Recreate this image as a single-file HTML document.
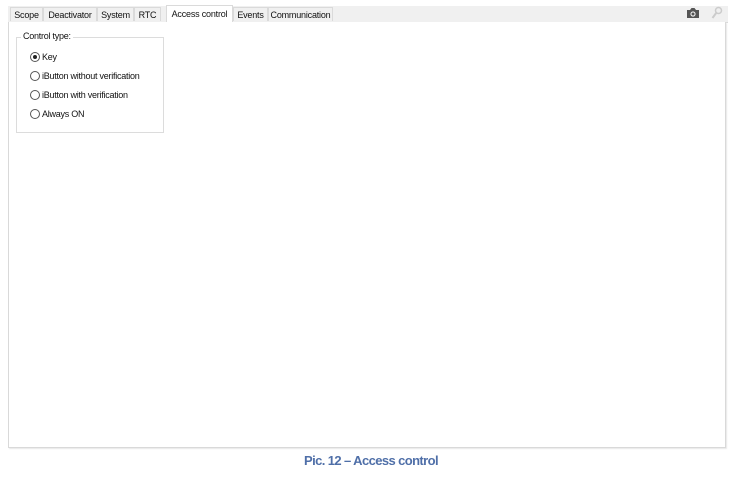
<!DOCTYPE html>
<html><head><style>
body{margin:0;width:742px;height:480px;background:#fff;position:relative;font-family:"Liberation Sans",sans-serif;overflow:hidden}
.a{position:absolute}
.strip{left:8px;top:6px;width:720px;height:16px;background:#f0f0f0;border-bottom:1px solid #d9d9d9}
.tab{position:absolute;top:7px;height:14px;font-size:9px;line-height:14px;color:#111;border:1px solid #dadada;border-bottom:none;background:#f0f0f0;text-align:center;box-sizing:border-box;letter-spacing:-0.2px;white-space:nowrap}
.panel{left:8px;top:22px;width:718px;height:426px;border:1px solid #d9d9d9;border-top:none;box-sizing:border-box;background:#fff;box-shadow:1px 1px 1px #e8e8e8}
.grp{left:16px;top:37px;width:148px;height:96px;border:1px solid #dcdcdc;box-sizing:border-box}
.lbl{font-size:9px;color:#111;letter-spacing:-0.25px;white-space:nowrap}
.rad{position:absolute;left:30px;width:10px;height:10px;border:1px solid #555;border-radius:50%;box-sizing:border-box;background:#fff}
</style></head><body>
<div class="a strip"></div>
<div class="tab" style="left:10px;width:33px">Scope</div>
<div class="tab" style="left:43px;width:54px">Deactivator</div>
<div class="tab" style="left:97px;width:37px">System</div>
<div class="tab" style="left:134px;width:27px">RTC</div>
<div class="tab" style="left:166px;top:5px;height:18px;width:67px;background:#fff;line-height:16px">Access control</div>
<div class="tab" style="left:233px;width:35px">Events</div>
<div class="tab" style="left:268px;width:65px">Communication</div>
<svg class="a" style="left:686px;top:7px" width="14" height="12" viewBox="0 0 14 12"><path d="M1 3h3l1.5-2h3L10 3h3v8H1z" fill="#555"/><circle cx="7" cy="7" r="2.6" fill="#f0f0f0"/><circle cx="7" cy="7" r="1.5" fill="#555"/></svg>
<svg class="a" style="left:711px;top:6px" width="12" height="14" viewBox="0 0 12 14"><circle cx="7.5" cy="4.5" r="3" fill="none" stroke="#ccc" stroke-width="1.5"/><path d="M5.5 6.5L1.5 12" stroke="#ccc" stroke-width="2"/></svg>
<div class="a panel"></div>
<div class="a grp"></div>
<div class="a lbl" style="left:21px;top:31px;background:#fff;padding:0 2px">Control type:</div>
<div class="rad" style="top:52px"><div style="position:absolute;left:2px;top:2px;width:4px;height:4px;border-radius:50%;background:#222"></div></div>
<div class="a lbl" style="left:42px;top:52px">Key</div>
<div class="rad" style="top:71px"></div>
<div class="a lbl" style="left:42px;top:71px">iButton without verification</div>
<div class="rad" style="top:90px"></div>
<div class="a lbl" style="left:42px;top:90px">iButton with verification</div>
<div class="rad" style="top:109px"></div>
<div class="a lbl" style="left:42px;top:109px">Always ON</div>
<div class="a" style="left:0;width:742px;top:453px;text-align:center;font-size:13px;font-weight:bold;color:#4f6fa8;letter-spacing:-0.6px">Pic. 12 – Access control</div>
</body></html>
